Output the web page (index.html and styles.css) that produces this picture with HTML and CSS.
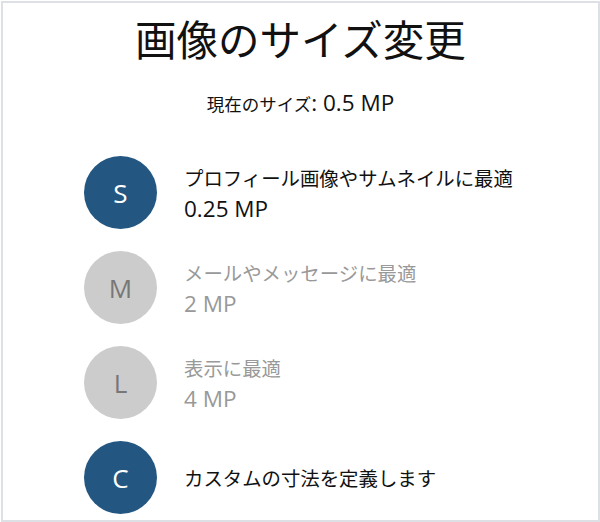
FILE: index.html
```html
<!DOCTYPE html>
<html lang="ja">
<head>
<meta charset="utf-8">
<title>画像のサイズ変更</title>
<link rel="stylesheet" href="styles.css">
</head>
<body>
<div class="frame">
  <h1 class="title">画像のサイズ変更</h1>
  <p class="current">現在のサイズ<span class="num">: 0.5 MP</span></p>
  <ul class="options">
    <li class="option">
      <span class="badge badge-active">S</span>
      <div class="label">
        <div class="line">プロフィール画像やサムネイルに最適</div>
        <div class="line num">0.25 MP</div>
      </div>
    </li>
    <li class="option option-disabled">
      <span class="badge badge-off">M</span>
      <div class="label">
        <div class="line">メールやメッセージに最適</div>
        <div class="line num">2 MP</div>
      </div>
    </li>
    <li class="option option-disabled">
      <span class="badge badge-off">L</span>
      <div class="label">
        <div class="line">表示に最適</div>
        <div class="line num">4 MP</div>
      </div>
    </li>
    <li class="option">
      <span class="badge badge-active">C</span>
      <div class="label">
        <div class="line">カスタムの寸法を定義します</div>
      </div>
    </li>
  </ul>
</div>
</body>
</html>
```
FILE: styles.css
```css
html, body {
  margin: 0;
  padding: 0;
  background: #ffffff;
}
body {
  font-family: "Open Sans", "Noto Sans CJK JP", sans-serif;
  color: #111111;
}
.frame {
  margin: 1px 0 0 1px;
  width: 599px;
  height: 521px;
  box-sizing: border-box;
  border: 2px solid #dde1e5;
  overflow: hidden;
}
.title {
  margin: 7px 0 0 0;
  font-family: "Noto Sans CJK JP", sans-serif;
  font-weight: 400;
  font-size: 41.5px;
  line-height: 56px;
  text-align: center;
  color: #111;
  white-space: nowrap;
}
.current {
  margin: 24px 0 0 0;
  font-family: "Noto Sans CJK JP", sans-serif;
  font-size: 17.5px;
  line-height: 26px;
  text-align: center;
  white-space: nowrap;
}
.num {
  font-family: "Open Sans", sans-serif;
  font-size: 22.5px;
  line-height: 26px;
}
.options {
  list-style: none;
  margin: 39px 0 0 0;
  padding: 0 0 0 81px;
  display: flex;
  flex-direction: column;
  gap: 22px;
}
.option {
  display: flex;
  align-items: center;
  gap: 27px;
}
.badge {
  flex: none;
  width: 73px;
  height: 73px;
  border-radius: 50%;
  display: flex;
  align-items: center;
  justify-content: center;
  font-size: 26px;
  line-height: 1;
}
.badge-active {
  background: #235781;
  color: #ffffff;
}
.badge-off {
  background: #cccccc;
  color: #777777;
}
.label {
  font-family: "Noto Sans CJK JP", sans-serif;
  font-size: 19.4px;
  line-height: 31px;
  white-space: nowrap;
}
.label .num {
  font-family: "Open Sans", sans-serif;
  font-size: 22.5px;
  line-height: 31px;
}
.option-disabled .label {
  color: #999999;
}
```
